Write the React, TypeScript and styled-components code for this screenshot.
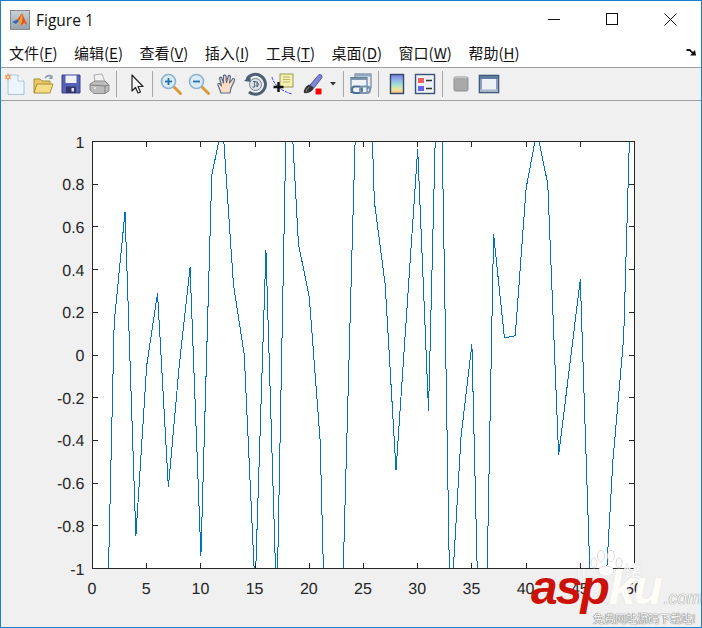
import React from "react";
import styled, { createGlobalStyle } from "styled-components";

const GlobalStyle = createGlobalStyle`
  html, body {
    margin: 0;
    padding: 0;
    background: #fff;
  }
`;

const Window = styled.div`
  position: relative;
  box-sizing: border-box;
  width: 702px;
  height: 628px;
  border: 1px solid #1b7fcf;
  display: flex;
  flex-direction: column;
  overflow: hidden;
  background: #fff;
`;

const TitleBar = styled.header`
  height: 37px;
  display: flex;
  align-items: center;
  padding-left: 9px;
  flex: none;
`;

const TitleText = styled.span`
  margin-left: 6px;
  font: 15.5px "Open Sans", "Noto Sans", sans-serif;
  color: #111;
`;

const Controls = styled.div`
  margin-left: auto;
  margin-right: 1px;
  display: flex;
  height: 100%;
`;

const Control = styled.div`
  width: 58.5px;
  display: flex;
  align-items: center;
  justify-content: center;
  padding-bottom: 1px;
`;

const MenuBar = styled.nav`
  position: relative;
  height: 29px;
  flex: none;
  display: flex;
  align-items: center;
  gap: 16.5px;
  padding-left: 8px;
  border-bottom: 1px solid #a0a0a0;
`;

const MenuItem = styled.span`
  font: 15px "Noto Sans CJK SC", "Noto Sans", sans-serif;
  color: #111;
  white-space: nowrap;
  u {
    text-underline-offset: 2px;
  }
`;

const DockArrow = styled.svg`
  position: absolute;
  right: 4px;
  top: 10px;
`;

const Toolbar = styled.div`
  height: 32px;
  flex: none;
  display: flex;
  align-items: center;
  background: #f0f0f0;
  border-bottom: 1px solid #a0a0a0;
`;

const ToolButton = styled.div<{ $w?: number }>`
  width: ${p => p.$w ?? 28}px;
  height: 28px;
  flex: none;
  display: flex;
  align-items: center;
  justify-content: center;
`;

const Separator = styled.div`
  width: 1px;
  height: 26px;
  flex: none;
  margin: 0 3px;
  background: #a8a8a8;
`;

const Figure = styled.main`
  flex: 1;
  background: #f0f0f0;
`;

const PlotSvg = styled.svg`
  display: block;
`;

const PlotArea = styled.rect`
  fill: #fff;
`;

const AxisBox = styled.rect`
  fill: none;
  stroke: #262626;
  stroke-width: 1;
  shape-rendering: crispEdges;
`;

const Tick = styled.line`
  stroke: #262626;
  stroke-width: 1;
  shape-rendering: crispEdges;
`;

const Trace = styled.polyline`
  fill: none;
  stroke: #0072bd;
  stroke-width: 1;
  shape-rendering: crispEdges;
`;

const TickLabel = styled.text`
  font: 16px "Liberation Sans", Arial, sans-serif;
  fill: #262626;
  text-rendering: geometricPrecision;
`;

const Watermark = styled.div`
  position: absolute;
  right: 3px;
  bottom: 1px;
  width: 170px;
  height: 78px;
  pointer-events: none;
`;

const Paw = styled.svg`
  position: absolute;
  left: 60px;
  top: 1px;
`;

const Ghost = styled.span<{ $left: number }>`
  position: absolute;
  left: ${p => p.$left}px;
  top: 12px;
  font: 19px "Noto Sans CJK SC", sans-serif;
  line-height: 24px;
  color: #fbfbfb;
  text-shadow: 0 0 1px #c8c8c8;
`;

const Brand = styled.div`
  position: absolute;
  left: 3px;
  top: 14px;
  display: flex;
  align-items: baseline;
  font-family: "Liberation Sans", Arial, sans-serif;
  font-style: italic;
  font-weight: 700;
  line-height: 52px;
  white-space: nowrap;
`;

const BrandRed = styled.span`
  font-size: 48px;
  letter-spacing: -2px;
  color: #cc1208;
`;

const BrandWhite = styled.span`
  font-size: 48px;
  letter-spacing: -2px;
  margin-left: 1px;
  color: #fffdf8;
  text-shadow: 0 0 1px #d8d8d8;
`;

const BrandCom = styled.span`
  font-size: 17.5px;
  font-weight: 400;
  margin-left: 3px;
  color: #f4f4f4;
  text-shadow: 0 0 1px #555;
`;

const Slogan = styled.div`
  position: absolute;
  left: 65px;
  bottom: 1px;
  font: 11px "Noto Sans CJK SC", sans-serif;
  line-height: 14px;
  color: #fff;
  text-shadow: 0 0 1px #555, 0 0 1px #555;
  white-space: nowrap;
`;

const ORIGIN_X = 92.5;
const PER_X = 10.84;
const ZERO_Y = 355;
const PER_Y = 213.5;

const px = (x: number) => ORIGIN_X + x * PER_X;
const py = (y: number) => ZERO_Y - y * PER_Y;

const values = [
  -2.05, 0.15, 0.67, -0.85, -0.05, 0.29, -0.62, -0.05, 0.41, -0.94, 0.84, 1.09, 0.33, 0.0, -1.1,
  0.49, -1.2, 1.45, 0.52, 0.27, -0.4, -2.4, -1.25, 0.6, 2.36, 0.72, 0.33, -0.54, 0.21, 0.965,
  -0.26, 1.8, -1.25, -0.38, 0.05, -2.1, 0.567, 0.08, 0.09, 0.78, 1.05, 0.8, -0.47, -0.06, 0.355,
  -1.2, -1.4, -0.5, 0.08, 1.83
];

const points = values.map((v, i) => `${px(i + 1)},${py(v)}`).join(" ");
const xTicks = Array.from({ length: 11 }, (_, i) => i * 5);
const yTicks = Array.from({ length: 11 }, (_, i) => -1 + i * 0.2);

const yLabel = (v: number) => String(Math.round(v * 10) / 10);

const menus: [string, string][] = [
  ["文件", "F"],
  ["编辑", "E"],
  ["查看", "V"],
  ["插入", "I"],
  ["工具", "T"],
  ["桌面", "D"],
  ["窗口", "W"],
  ["帮助", "H"]
];

const MatlabLogo = () => (
  <svg width="20" height="20" viewBox="0 0 20 20">
    <defs>
      <linearGradient id="tile" x1="0" y1="0" x2="0" y2="1">
        <stop offset="0" stopColor="#c8d0d8" />
        <stop offset="1" stopColor="#9aa3ad" />
      </linearGradient>
    </defs>
    <rect x="0.5" y="0.5" width="19" height="19" fill="url(#tile)" stroke="#8a8a8a" />
    <path d="M2 12 L7 9.5 L9 11 L6 14 Z" fill="#2f6fb0" />
    <path d="M7 10 L12 3 L15 10 L17.5 15 L14 13 L10.5 16 L9 11 Z" fill="#e2571e" />
    <path d="M12 3 L9 11 L10.5 16 L12.5 9 Z" fill="#f3a43a" />
  </svg>
);

const Icon: React.FC<{ children: React.ReactNode }> = ({ children }) => (
  <svg width="24" height="24" viewBox="0 0 24 24">
    {children}
  </svg>
);

const Lens = ({ minus }: { minus?: boolean }) => (
  <Icon>
    <path d="M14 14 L21.5 21.5" stroke="#d99a3a" strokeWidth="3" strokeLinecap="round" />
    <circle cx="9.5" cy="9.5" r="7" fill="#d8ebf7" stroke="#8fb2cc" strokeWidth="1.6" />
    <path d="M6 9.5 H13" stroke="#2b6fa8" strokeWidth="1.8" />
    {!minus && <path d="M9.5 6 V13" stroke="#2b6fa8" strokeWidth="1.8" />}
  </Icon>
);

const icons = {
  newFile: (
    <Icon>
      <path d="M5 3 H15 L21 9 V22.5 H5 Z" fill="#eaf5fc" stroke="#a9c4d6" />
      <path d="M15 3 V9 H21" fill="#fff" stroke="#a9c4d6" />
      <path d="M5 1 L6 3.5 L8.5 3 L7 5 L8.5 7 L6 6.5 L5 9 L4 6.5 L1.5 7 L3 5 L1.5 3 L4 3.5 Z" fill="#ee8a4a" />
      <circle cx="5" cy="5" r="1.2" fill="#fbe0b0" />
    </Icon>
  ),
  open: (
    <Icon>
      <path d="M14 6 Q17 2 21 5" fill="none" stroke="#8a9aa8" strokeWidth="1.6" />
      <path d="M21.5 3 V7 H17.5 Z" fill="#8a9aa8" />
      <path d="M3 21 V7 H9 L11 9 H19 V12" fill="#e9c766" stroke="#a98f3c" />
      <path d="M3 21 L6 12 H22 L19 21 Z" fill="#f6dc85" stroke="#a98f3c" />
    </Icon>
  ),
  save: (
    <Icon>
      <path d="M3 3 H21 V21 H3 Z" fill="#5561b8" stroke="#3a4488" />
      <rect x="6.5" y="3.5" width="11" height="7.5" fill="#eef0fb" />
      <rect x="7" y="14.5" width="10" height="6.5" fill="#35356a" />
      <rect x="12.5" y="16" width="2.5" height="3.5" fill="#e0e0e8" />
    </Icon>
  ),
  print: (
    <Icon>
      <path d="M7 3 L15 2 L18 10 H8 Z" fill="#f2f2f2" stroke="#adadad" />
      <path d="M3 12 L8 9 H18 L22 13 V19 L18 21.5 H7 L3 18 Z" fill="#bcbcbc" stroke="#8c8c8c" />
      <path d="M3 13 L18 14 L22 13 M18 14 V21" fill="none" stroke="#808080" />
      <circle cx="8" cy="16" r="1" fill="#ececec" />
    </Icon>
  ),
  pointer: (
    <Icon>
      <path
        d="M9 3 L9 19 L12.5 15.5 L15 21 L17.5 20 L15 14.5 L20 14.5 Z"
        fill="#f4f4f4"
        stroke="#222"
        strokeWidth="1.2"
        strokeLinejoin="round"
      />
    </Icon>
  ),
  pan: (
    <Icon>
      <path
        d="M6 21 L3 13 Q2.5 11 4.5 11.5 L6.5 14 L4.5 6 Q5 4.5 6.5 5.5 L8.5 11 L8.5 3.5 Q10 2.5 11 4 L11.5 10.5 L13.5 3.5 Q15 3 15.5 4.5 L14.5 11 L18 6.5 Q20 6.5 19.5 8.5 L16 16 L15 21 Z"
        fill="#fbdcc4"
        stroke="#5b6b86"
        strokeWidth="1.2"
        strokeLinejoin="round"
      />
    </Icon>
  ),
  rotate: (
    <Icon>
      <path d="M4 7 A10 10 0 1 1 6 20" fill="none" stroke="#4d5f72" strokeWidth="3" />
      <path d="M1 9 L7 3 L8 10 Z" fill="#4d5f72" />
      <circle cx="12.5" cy="12.5" r="6" fill="#dde3e8" stroke="#6d7f90" />
      <path d="M10 9.5 H12.5 L11 12 Q13 12.5 11.5 15 L9.5 15 M14 9.5 V15 Q17 12.5 14 9.5" fill="none" stroke="#44586c" strokeWidth="1" />
    </Icon>
  ),
  cursor: (
    <Icon>
      <path d="M1 5 Q4 17 21 22" fill="none" stroke="#3b3bf0" strokeWidth="1" strokeDasharray="3 1" />
      <rect x="9" y="2" width="13" height="13" fill="#f5efb0" stroke="#9a9a58" />
      <path d="M12 5 H19 M12 7.5 H19 M12 10 H19" stroke="#b8b86a" />
      <path d="M7.5 10 V20 M2.5 15 H12.5" stroke="#111" strokeWidth="2.4" />
    </Icon>
  ),
  brush: (
    <Icon>
      <path d="M10 13 L19 2.5 Q22.5 2 22 5.5 L14 16 Z" fill="#7f84d8" stroke="#555aa8" />
      <path d="M4 21 Q3 16 9 12.5 L14 16 Q11 22 4 21 Z" fill="#333" />
      <path d="M6 20 Q6 17 9.5 15" fill="none" stroke="#888" />
      <rect x="15" y="16" width="7" height="7" fill="#f00" stroke="#fff" />
    </Icon>
  ),
  link: (
    <Icon>
      <rect x="6" y="2" width="16" height="14" fill="#e8eef4" stroke="#52708e" />
      <rect x="6" y="2" width="16" height="2.5" fill="#8fa6bc" />
      <rect x="2" y="5.5" width="16" height="15" fill="#eff3f7" stroke="#3f6388" />
      <rect x="2" y="5.5" width="16" height="2.5" fill="#7e97ae" />
      <rect x="3" y="14.5" width="10" height="6.5" rx="3" fill="#eff3f7" stroke="#4a7194" strokeWidth="2" />
      <rect x="11" y="14.5" width="10" height="6.5" rx="3" fill="none" stroke="#7793ad" strokeWidth="2" />
    </Icon>
  ),
  colorbar: (
    <Icon>
      <defs>
        <linearGradient id="cbar" x1="0" y1="0" x2="0" y2="1">
          <stop offset="0" stopColor="#7d7be0" />
          <stop offset="0.3" stopColor="#8fb6e8" />
          <stop offset="0.55" stopColor="#a8e0d0" />
          <stop offset="0.8" stopColor="#f2e59a" />
          <stop offset="1" stopColor="#f4b47a" />
        </linearGradient>
      </defs>
      <rect x="5.5" y="2.5" width="13" height="19" fill="url(#cbar)" stroke="#31476b" strokeWidth="1.4" />
    </Icon>
  ),
  legend: (
    <Icon>
      <rect x="2.5" y="2.5" width="19" height="19" fill="#eef2f6" stroke="#39527a" strokeWidth="1.4" />
      <rect x="5" y="6" width="6" height="5" fill="#ef5f5f" />
      <rect x="5" y="14" width="6" height="5" fill="#6464e6" />
      <path d="M13 8.5 H19 M13 16.5 H19" stroke="#333" strokeWidth="1.4" />
    </Icon>
  ),
  rect: (
    <Icon>
      <rect x="5" y="5" width="14" height="14" rx="1.5" fill="#a8a8a8" stroke="#909090" />
      <path d="M5.5 7 Q5.5 5.5 7 5.5 H18" fill="none" stroke="#c4c4c4" />
    </Icon>
  ),
  panel: (
    <Icon>
      <rect x="2.5" y="3.5" width="19" height="17" fill="#eef2f6" stroke="#3f5a80" strokeWidth="1.6" />
      <rect x="3" y="4" width="18" height="3" fill="#5f7ba0" />
      <rect x="3" y="17.5" width="18" height="2.5" fill="#a6b5c6" />
      <rect x="3" y="7" width="2" height="10.5" fill="#8ba0b8" />
      <rect x="19" y="7" width="2" height="10.5" fill="#8ba0b8" />
    </Icon>
  )
};

const App = () => (
  <>
    <GlobalStyle />
    <Window>
      <TitleBar>
        <MatlabLogo />
        <TitleText>Figure 1</TitleText>
        <Controls>
          <Control>
            <svg width="13" height="13" viewBox="0 0 13 13">
              <path d="M0.5 6.5 H12.5" stroke="#111" shapeRendering="crispEdges" />
            </svg>
          </Control>
          <Control>
            <svg width="13" height="13" viewBox="0 0 13 13">
              <rect x="0.5" y="0.5" width="11" height="11" fill="none" stroke="#111" shapeRendering="crispEdges" />
            </svg>
          </Control>
          <Control>
            <svg width="13" height="13" viewBox="0 0 13 13">
              <path d="M0.5 0.5 L12.5 12.5 M12.5 0.5 L0.5 12.5" stroke="#111" />
            </svg>
          </Control>
        </Controls>
      </TitleBar>
      <MenuBar>
        {menus.map(([name, key]) => (
          <MenuItem key={key}>
            {name}(<u>{key}</u>)
          </MenuItem>
        ))}
        <DockArrow width="11" height="8" viewBox="0 0 11 8">
          <path d="M0.5 1 L4 1 L7 4 L9 2 L10 7.5 L4 7.5 L6 5.5 L3.5 3 L0.5 3 Z" fill="#111" />
        </DockArrow>
      </MenuBar>
      <Toolbar>
        <ToolButton>{icons.newFile}</ToolButton>
        <ToolButton>{icons.open}</ToolButton>
        <ToolButton>{icons.save}</ToolButton>
        <ToolButton>{icons.print}</ToolButton>
        <Separator />
        <ToolButton $w={29}>{icons.pointer}</ToolButton>
        <Separator />
        <ToolButton $w={29}><Lens /></ToolButton>
        <ToolButton><Lens minus /></ToolButton>
        <ToolButton>{icons.pan}</ToolButton>
        <ToolButton>{icons.rotate}</ToolButton>
        <ToolButton>{icons.cursor}</ToolButton>
        <ToolButton $w={29}>{icons.brush}</ToolButton>
        <ToolButton $w={14}>
          <svg width="6" height="4" viewBox="0 0 6 4">
            <path d="M0 0 H6 L3 3.5 Z" fill="#333" />
          </svg>
        </ToolButton>
        <Separator />
        <ToolButton>{icons.link}</ToolButton>
        <Separator />
        <ToolButton $w={29}>{icons.colorbar}</ToolButton>
        <ToolButton>{icons.legend}</ToolButton>
        <Separator />
        <ToolButton $w={29}>{icons.rect}</ToolButton>
        <ToolButton>{icons.panel}</ToolButton>
      </Toolbar>
      <Figure>
        <PlotSvg width="700" height="526" viewBox="1 101 700 526">
          <defs>
            <clipPath id="plot-clip">
              <rect x="92" y="141" width="542.5" height="428" />
            </clipPath>
          </defs>
          <PlotArea x="92.5" y="141.5" width="542" height="427" />
          <Trace points={points} clipPath="url(#plot-clip)" />
          {xTicks.map(t => (
            <g key={t}>
              <Tick x1={px(t)} x2={px(t)} y1={568.5} y2={563} />
              <Tick x1={px(t)} x2={px(t)} y1={141.5} y2={147} />
              <TickLabel x={px(t) - 0.5} y={594} textAnchor="middle">
                {t}
              </TickLabel>
            </g>
          ))}
          {yTicks.map(t => (
            <g key={t}>
              <Tick x1={92.5} x2={98} y1={py(t)} y2={py(t)} />
              <Tick x1={634.5} x2={629} y1={py(t)} y2={py(t)} />
              <TickLabel x={84.5} y={py(t) + 6} textAnchor="end">
                {yLabel(t)}
              </TickLabel>
            </g>
          ))}
          <AxisBox x="92.5" y="141.5" width="542" height="427" />
        </PlotSvg>
      </Figure>
      <Watermark>
        <Paw width="36" height="26" viewBox="0 0 36 26">
          <g fill="#fbfbfb" stroke="#d4d4d4" strokeWidth="0.8">
            <ellipse cx="6" cy="14" rx="3" ry="5" />
            <ellipse cx="13" cy="7" rx="3.5" ry="6" />
            <ellipse cx="23" cy="7" rx="3.5" ry="6" />
            <ellipse cx="31" cy="14" rx="3" ry="5" />
            <ellipse cx="18" cy="22" rx="8" ry="5" />
          </g>
        </Paw>
        <Ghost $left={48}>ji</Ghost>
        <Ghost $left={95}>烤</Ghost>
        <Brand>
          <BrandRed>asp</BrandRed>
          <BrandWhite>ku</BrandWhite>
          <BrandCom>.com</BrandCom>
        </Brand>
        <Slogan>免费网站源码下载站!</Slogan>
      </Watermark>
    </Window>
  </>
);

export default App;
